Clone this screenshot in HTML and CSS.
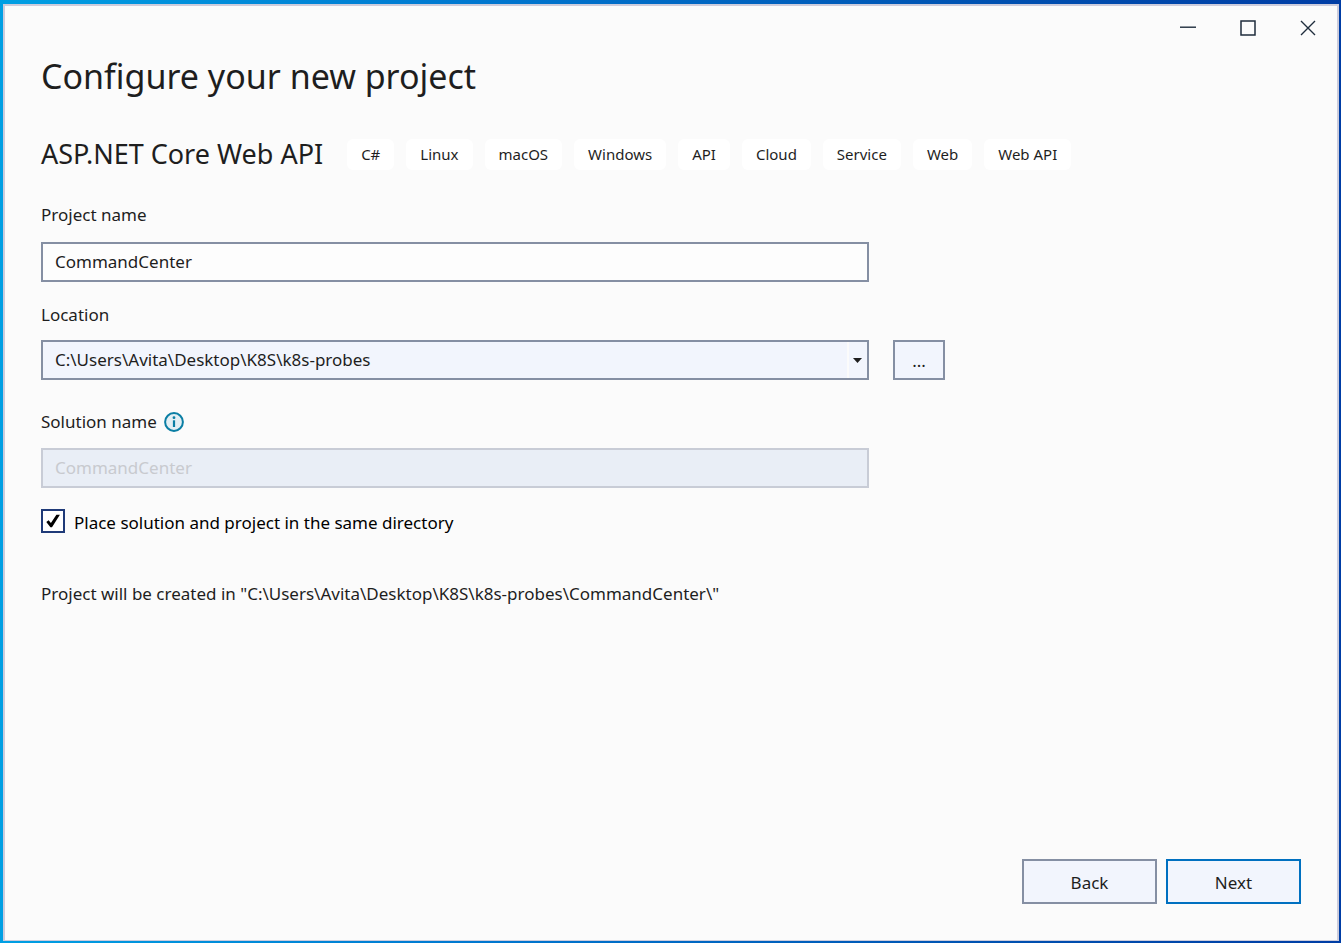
FILE: index.html
```
<!DOCTYPE html>
<html lang="en">
<head>
<meta charset="utf-8">
<meta name="viewport" content="width=device-width, initial-scale=1">
<title>Configure your new project</title>
<link rel="stylesheet" href="styles.css">
</head>
<body>
<div class="window">
  <header class="titlebar">
    <button class="caption" type="button" aria-label="Minimize">
      <svg width="16" height="16" viewBox="0 0 16 16"><path d="M0 7.2h16" stroke="currentColor" stroke-width="1.4"/></svg>
    </button>
    <button class="caption" type="button" aria-label="Maximize">
      <svg width="16" height="16" viewBox="0 0 16 16"><path d="M1 1h14v14H1z" fill="none" stroke="currentColor" stroke-width="1.5"/></svg>
    </button>
    <button class="caption" type="button" aria-label="Close">
      <svg width="16" height="16" viewBox="0 0 16 16"><path d="M1 1l14 14M15 1L1 15" stroke="currentColor" stroke-width="1.4"/></svg>
    </button>
  </header>
  <main class="content">
    <h1 class="title">Configure your new project</h1>
    <div class="template">
      <h2 class="template-name">ASP.NET Core Web API</h2>
      <ul class="tags">
        <li class="tag">C#</li>
        <li class="tag">Linux</li>
        <li class="tag">macOS</li>
        <li class="tag">Windows</li>
        <li class="tag">API</li>
        <li class="tag">Cloud</li>
        <li class="tag">Service</li>
        <li class="tag">Web</li>
        <li class="tag">Web API</li>
      </ul>
    </div>
    <form class="form" id="project-form">
      <label class="label" for="project-name">Project name</label>
      <input class="field" id="project-name" type="text" value="CommandCenter">

      <label class="label label-location" for="location">Location</label>
      <div class="location">
        <div class="combo">
          <select class="field combo-select" id="location">
            <option>C:\Users\Avita\Desktop\K8S\k8s-probes</option>
          </select>
          <span class="combo-drop">
            <svg width="9" height="5" viewBox="0 0 9 5"><path d="M0 0h9L4.500 5z" fill="#1e1e1e"/></svg>
          </span>
        </div>
        <button class="button browse" type="button" aria-label="Browse">...</button>
      </div>

      <div class="label-row">
        <label class="label" for="solution-name">Solution name</label>
        <svg class="info" width="20" height="20" viewBox="0 0 20 20" role="img" aria-label="Information">
          <circle cx="10" cy="10" r="8.900" fill="#e3eff4" stroke="#0a7ea4" stroke-width="2"/>
          <circle cx="10" cy="5.700" r="1.400" fill="#0a7ea4"/>
          <path d="M10 8.300v6.700" stroke="#0a7ea4" stroke-width="2.200"/>
        </svg>
      </div>
      <input class="field" id="solution-name" type="text" value="CommandCenter" disabled>

      <div class="check-row">
        <span class="check">
          <input class="check-box" id="same-directory" type="checkbox" checked>
          <svg class="check-mark" width="14" height="14" viewBox="0 0 14 14"><path d="M0.300 8L2.600 6.300L4.900 8.900L10.400 0.800L13.900 0.800L6 13.200L4.400 13.200Z" fill="#000"/></svg>
        </span>
        <label class="check-label" for="same-directory">Place solution and project in the same directory</label>
      </div>
      <p class="summary">Project will be created in "C:\Users\Avita\Desktop\K8S\k8s-probes\CommandCenter\"</p>
    </form>
  </main>
  <footer class="actions">
    <button class="button action" type="button">Back</button>
    <button class="button action primary" type="submit" form="project-form">Next</button>
  </footer>
</div>
</body>
</html>
```
FILE: styles.css
```
* { box-sizing: border-box; }

body {
  margin: 0;
  min-height: 100vh;
  padding: 4px 2px 2px 3px;
  display: flex;
  background: linear-gradient(90deg, #009fe3 0%, #0078d0 35%, #0050b0 75%, #003da5 100%);
  color: #1e1e1e;
  font-family: "Noto Sans", "Open Sans", sans-serif;
  font-size: 17px;
  line-height: 24px;
}

button, input, select { font: inherit; color: inherit; }

.window {
  flex: 1;
  display: flex;
  flex-direction: column;
  min-width: 0;
  background: #fbfbfb;
  border: 2px solid #ccccdc;
  border-bottom-width: 1px;
}

.titlebar {
  display: flex;
  justify-content: flex-end;
}

.caption {
  display: grid;
  place-items: center;
  width: 60px;
  height: 44px;
  padding: 0 0 0 2px;
  border: 0;
  background: none;
  color: #1f2d3d;
}

.content {
  flex: 1;
  padding: 0 36px;
}

.title, .template-name {
  margin: 0;
  font-weight: 400;
}

.title {
  font-size: 34px;
  line-height: 48px;
  margin-top: 2px;
}

.template {
  display: flex;
  flex-wrap: wrap;
  align-items: center;
  gap: 8px 24px;
  margin-top: 36px;
}

.template-name {
  font-size: 27px;
  line-height: 36px;
}

.tags {
  display: flex;
  flex-wrap: wrap;
  gap: 12px;
  margin: 0;
  padding: 0;
  list-style: none;
}

.tag {
  padding: 4px 14px;
  border-radius: 6px;
  background: #fff;
  font-size: 15px;
  line-height: 23px;
}

.form { margin-top: 31px; }

.label { display: block; }

.field {
  display: block;
  width: 100%;
  max-width: 828px;
  height: 40px;
  margin-top: 15px;
  padding: 0 12px 2px;
  border: 2px solid #858fa3;
  border-radius: 0;
  background: #fdfdfd;
}

.field:disabled {
  margin-top: 14px;
  border-color: #c8ccd6;
  background: #e9eef6;
  color: #c8cacf;
}

.label-location { margin-top: 21px; }

.location {
  display: flex;
  gap: 24px;
  margin-top: 13px;
}

.combo {
  display: grid;
  flex: 0 1 828px;
}

.combo > * { grid-area: 1 / 1; }

.combo-select {
  appearance: none;
  margin: 0;
  padding: 0 12px;
  background: #f2f5fd;
}

.combo-drop {
  display: grid;
  place-items: center;
  justify-self: end;
  width: 20px;
  margin: 2px;
  padding-right: 2px;
  border-left: 2px solid #fbfbfb;
  pointer-events: none;
}

.button {
  padding: 2px 0 0;
  border: 2px solid #858fa3;
  border-radius: 0;
  background: #f2f5fd;
}

.browse { width: 52px; }

.label-row {
  display: flex;
  align-items: center;
  gap: 7px;
  margin-top: 30px;
}

.check-row {
  display: flex;
  align-items: flex-start;
  gap: 9px;
  margin-top: 21px;
  color: #000;
}

.check { display: grid; }

.check > * { grid-area: 1 / 1; }

.check-label { padding-top: 2px; }

.check-box {
  appearance: none;
  width: 24px;
  height: 24px;
  margin: 0;
  border: 2px solid #1f3a78;
  background: #fff;
}

.check-mark {
  place-self: center;
  visibility: hidden;
  pointer-events: none;
}

.check-box:checked + .check-mark { visibility: visible; }

.summary { margin: 47px 0 0; }

.actions {
  display: flex;
  justify-content: flex-end;
  gap: 9px;
  padding: 0 36px 36px;
}

.action {
  width: 135px;
  height: 45px;
}

.primary { border-color: #0070c0; }
```
